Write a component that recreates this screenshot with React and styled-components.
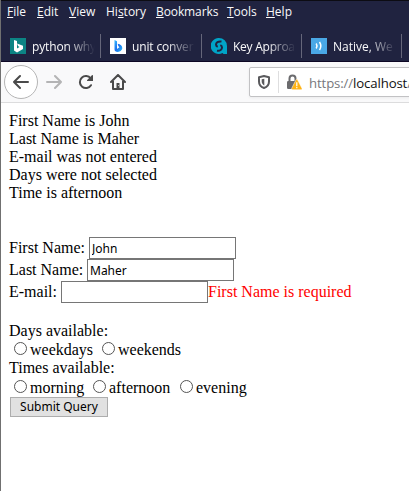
import React from "react";
import styled, { createGlobalStyle } from "styled-components";

const GlobalStyle = createGlobalStyle`
  * { box-sizing: border-box; }
  html, body { margin: 0; padding: 0; overflow: hidden; background: #fff; }
`;

const Window = styled.div`
  width: 409px;
  height: 491px;
  overflow: hidden;
  border-left: 1px solid #707070;
  background: #fff;
`;

const Header = styled.header`
  height: 62px;
  background: #202340;
  border-top: 1px solid #0c0c13;
  border-bottom: 1px solid #0d0724;
  color: #f9f9fa;
  font-family: "Open Sans", "Noto Sans", sans-serif;
  font-size: 12px;
`;

const MenuBar = styled.nav`
  display: flex;
  height: 30px;
  padding: 2px 0 0 6px;
  line-height: 17px;
`;

const MenuItem = styled.span`
  flex: none;
  width: ${(p) => p.$width}px;
  letter-spacing: ${(p) => p.$spacing || 0}px;
  white-space: nowrap;

  u { text-underline-offset: 1px; text-decoration-thickness: 1px; }
`;

const TabStrip = styled.div`
  display: flex;
  height: 30px;
`;

const Tab = styled.div`
  display: flex;
  flex: none;
  align-items: center;
  width: ${(p) => p.$width}px;
  height: 30px;
  padding-left: 9px;
  background: linear-gradient(#65667a, #65667a) right 3px / 1px 24px no-repeat;

  svg { flex: none; display: block; }
`;

const TabTitle = styled.span`
  width: 64px;
  margin: 2px 0 0 6px;
  white-space: nowrap;
  line-height: 20px;
  letter-spacing: ${(p) => p.$spacing || 0}px;
  mask-image: linear-gradient(to right, #000 34px, transparent 63px);
`;

const NavBar = styled.div`
  display: flex;
  height: 41px;
  padding: 3px 0 0 3px;
  background: #f9f9fa;
  border-bottom: 1px solid #dcdcdd;
`;

const BackButton = styled.span`
  display: grid;
  flex: none;
  place-items: center;
  width: 34px;
  height: 34px;
  border: 1px solid #b5b5b5;
  border-radius: 50%;
  background: #fff;
`;

const NavButton = styled.span`
  display: grid;
  flex: none;
  place-items: center;
  width: 32px;
  height: 34px;
`;

const UrlBar = styled.div`
  display: flex;
  align-items: center;
  flex: none;
  width: 200px;
  height: 30px;
  margin: 2px 0 0 115px;
  padding-left: 6px;
  background: #fff;
  border: 1px solid #c2c2c4;
  border-radius: 2px;
  box-shadow: 0 1px 3px rgba(0, 0, 0, 0.06);

  svg { flex: none; }
`;

const UrlDivider = styled.span`
  width: 1px;
  height: 22px;
  margin: 0 7px 0 6px;
  background: #dededf;
`;

const Url = styled.span`
  margin: 2px 0 0 7px;
  color: #111;
  font: 13.2px/20px "Open Sans", "Noto Sans", sans-serif;
  letter-spacing: -0.12px;
  white-space: nowrap;

  span { color: #77777c; }
`;

const Page = styled.main`
  padding: 9px 0 0 8px;
  color: #000;
  font: 16px/18px "Liberation Serif", "Times New Roman", serif;
`;

const Results = styled.div`
  height: 125px;
`;

const Line = styled.div`
  height: ${(p) => p.$height || 18}px;
  white-space: nowrap;
`;

const Field = styled.label`
  display: flex;
  height: 22px;
  line-height: 22px;
  white-space: nowrap;
`;

const FieldLabel = styled.span`
  width: ${(p) => p.$width}px;
`;

const TextInput = styled.input`
  width: 147px;
  height: 22px;
  margin: 0;
  padding: 1px 2px;
  border: 1px solid #767676;
  border-radius: 0;
  background: #fff;
  color: #000;
  outline: none;
  font: 12px "Noto Sans", sans-serif;
`;

const ErrorText = styled.span`
  color: #f00;
`;

const Choices = styled.div`
  margin-top: 19px;
`;

const RadioRow = styled.div`
  display: flex;
  height: 19px;
  padding-left: 5px;
  line-height: 19px;
`;

const RadioLabel = styled.label`
  display: flex;
  flex: none;
  width: ${(p) => p.$width}px;
  white-space: nowrap;
`;

const Radio = styled.input`
  appearance: none;
  flex: none;
  width: 13px;
  height: 13px;
  margin: 2px 3px 0 0;
  border: 1px solid #555;
  border-radius: 50%;
  background: #fff;
`;

const Submit = styled.button`
  display: block;
  width: 98px;
  height: 20px;
  margin: 0 0 0 1px;
  padding: 0;
  border: 1px solid #adadad;
  border-radius: 0;
  background: #e1e1e1;
  color: #000;
  font: 12px/18px "Noto Sans", sans-serif;
  white-space: nowrap;
`;

const menus = [
  ["F", "ile", "", 30], ["E", "dit", "", 32], ["V", "iew", "", 37],
  ["s", "tory", "Hi", 50], ["B", "ookmarks", "", 71], ["T", "ools", "", 39],
  ["H", "elp", "", 30],
];

const bingPath = "M4 2l3 1v7.5L9.5 9 8 8 7 5.5l6 2.2V11l-6 3.5-3-2z";

function BingTeal() {
  return (
    <svg width="16" height="16" viewBox="0 0 16 16">
      <path fill="#0c8484" d="M0 0h16v16H0z" />
      <path fill="#fff" d={bingPath} />
    </svg>
  );
}

function BingBlue() {
  return (
    <svg width="16" height="16" viewBox="0 0 16 16">
      <defs>
        <linearGradient id="bing" x1="0" y1="0" x2="1" y2="1">
          <stop offset="0" stopColor="#37bdff" />
          <stop offset=".5" stopColor="#1b70ee" />
          <stop offset="1" stopColor="#29bdf5" />
        </linearGradient>
      </defs>
      <path fill="#fff" d="M0 0h16v16H0z" />
      <path fill="url(#bing)" d="M4.5 2l2.5 1.2V11l2.4-1.7L8.3 8l-.7-2.2c3 .5 4.7 2.1 4.7 4.3 0 2-2.2 3.9-4.5 3.9-2 0-3.3-1-3.3-2.5z" />
    </svg>
  );
}

function KeyIcon() {
  return (
    <svg width="16" height="16" viewBox="0 0 16 16">
      <path fill="#00a4c7" d="M8 0a8 8 0 0 1 8 8v8h-3.5l-1-1A8 8 0 1 1 8 0z" />
      <path fill="none" stroke="#202340" strokeWidth="2" d="M10.5 3.5C7 3 5 4.7 5 6.5c0 1.3.8 2 1.7 2.4M6 12.7c3.2.5 5-1.3 5-3.2 0-1.3-.8-2-1.7-2.4" />
    </svg>
  );
}

function WaveIcon() {
  return (
    <svg width="16" height="16" viewBox="0 0 16 16">
      <path fill="#4aa8e6" d="M0 0h16v16H0z" />
      <path fill="none" stroke="#fff" strokeWidth="1.5" d="M5.2 5.5q1.6 2.5 0 5M8.5 4q2.6 4 0 8" />
    </svg>
  );
}

function Arrow({ color, flip }) {
  return (
    <svg width="16" height="16" viewBox="0 0 16 16">
      <path
        fill="none" stroke={color} strokeWidth="2" strokeLinecap="round" strokeLinejoin="round"
        d={flip ? "M1 8h14M9 2l6 6-6 6" : "M15 8H1M7 2L1 8l6 6"}
      />
    </svg>
  );
}

function Reload() {
  return (
    <svg width="16" height="16" viewBox="0 0 16 16">
      <path fill="none" stroke="#4a4a4a" strokeWidth="2" strokeLinecap="round" d="M13 11.2A6 6 0 1 1 12.7 4.5" />
      <path fill="#4a4a4a" d="M14.4 1c.4 0 .6.3.6.6V7H9.6c-.6 0-.8-.6-.4-1l4.7-4.7z" />
    </svg>
  );
}

function Home() {
  return (
    <svg width="16" height="16" viewBox="0 0 16 16">
      <path fill="none" stroke="#4a4a4a" strokeWidth="2" strokeLinecap="round" strokeLinejoin="round" d="M1 8l7-7 7 7M3 7v8h10V7" />
      <path fill="#4a4a4a" d="M6.5 9h3v6h-3z" />
      <path fill="#bbb" d="M8 11h1v1H8z" />
    </svg>
  );
}

function Shield() {
  return (
    <svg width="16" height="16" viewBox="0 0 16 16">
      <path fill="none" stroke="#5a5a5d" strokeWidth="2" strokeLinejoin="round" d="M8 2l5 1.2v4.3c0 3-2 5.5-5 6.5-3-1-5-3.5-5-6.5V3.2z" />
      <path fill="#5a5a5d" d="M8.3 4.8v6.7c-1.6-.8-2.6-2.2-2.6-4V5.3z" />
    </svg>
  );
}

function LockWarning() {
  return (
    <svg width="16" height="16" viewBox="0 0 16 16">
      <path fill="none" stroke="#6b6b6e" strokeWidth="2" d="M3.5 8V4.5a3 3 0 0 1 6 0V8" />
      <rect x="1" y="7" width="10.5" height="8" rx="1.3" fill="#6b6b6e" />
      <path fill="#ffb315" stroke="#fff" strokeWidth=".5" d="M10 5.8c.4-.7 1.1-.7 1.5 0l4.4 8.5c.3.8 0 1.4-.8 1.4H6.5c-.8 0-1.1-.6-.8-1.4z" />
      <path fill="#fff" d="M10.2 8.3h1.2v3.9h-1.2zM10.2 13h1.2v1.3h-1.2z" />
    </svg>
  );
}

const tabs = [
  { Icon: BingTeal, title: "python why", width: 100, spacing: -0.15 },
  { Icon: BingBlue, title: "unit conver", width: 101, spacing: -0.15 },
  { Icon: KeyIcon, title: "Key Approa", width: 100, spacing: -0.25 },
  { Icon: WaveIcon, title: "Native, We", width: 100, spacing: 0 },
];

function Option({ name, width, children }) {
  return (
    <RadioLabel $width={width}>
      <Radio type="radio" name={name} />
      {children}
    </RadioLabel>
  );
}

export default function App() {
  return (
    <Window>
      <GlobalStyle />
      <Header>
        <MenuBar>
          {menus.map(([key, rest, lead, width]) => (
            <MenuItem key={lead + key + rest} $width={width} $spacing={key === "B" ? -0.1 : 0}>
              {lead}<u>{key}</u>{rest}
            </MenuItem>
          ))}
        </MenuBar>
        <TabStrip>
          {tabs.map(({ Icon, title, width, spacing }) => (
            <Tab key={title} $width={width}>
              <Icon />
              <TabTitle $spacing={spacing}>{title}</TabTitle>
            </Tab>
          ))}
        </TabStrip>
      </Header>
      <NavBar>
        <BackButton><Arrow color="#4a4a4a" /></BackButton>
        <NavButton><Arrow color="#b4b4b5" flip /></NavButton>
        <NavButton><Reload /></NavButton>
        <NavButton><Home /></NavButton>
        <UrlBar>
          <Shield />
          <UrlDivider />
          <LockWarning />
          <Url><span>https://</span>localhost<span>/</span></Url>
        </UrlBar>
      </NavBar>
      <Page>
        <Results>
          <Line>First Name is John</Line>
          <Line>Last Name is Maher</Line>
          <Line>E-mail was not entered</Line>
          <Line>Days were not selected</Line>
          <Line>Time is afternoon</Line>
        </Results>
        <Field>
          <FieldLabel $width={80}>First Name:</FieldLabel>
          <TextInput defaultValue="John" />
        </Field>
        <Field>
          <FieldLabel $width={78}>Last Name:</FieldLabel>
          <TextInput defaultValue="Maher" />
        </Field>
        <Field>
          <FieldLabel $width={52}>E-mail:</FieldLabel>
          <TextInput />
          <ErrorText>First Name is required</ErrorText>
        </Field>
        <Choices>
          <Line>Days available:</Line>
          <RadioRow>
            <Option name="days" width={88}>weekdays</Option>
            <Option name="days" width={90}>weekends</Option>
          </RadioRow>
          <Line $height={19}>Times available:</Line>
          <RadioRow>
            <Option name="times" width={79}>morning</Option>
            <Option name="times" width={87}>afternoon</Option>
            <Option name="times" width={80}>evening</Option>
          </RadioRow>
          <Submit type="button">Submit Query</Submit>
        </Choices>
      </Page>
    </Window>
  );
}
